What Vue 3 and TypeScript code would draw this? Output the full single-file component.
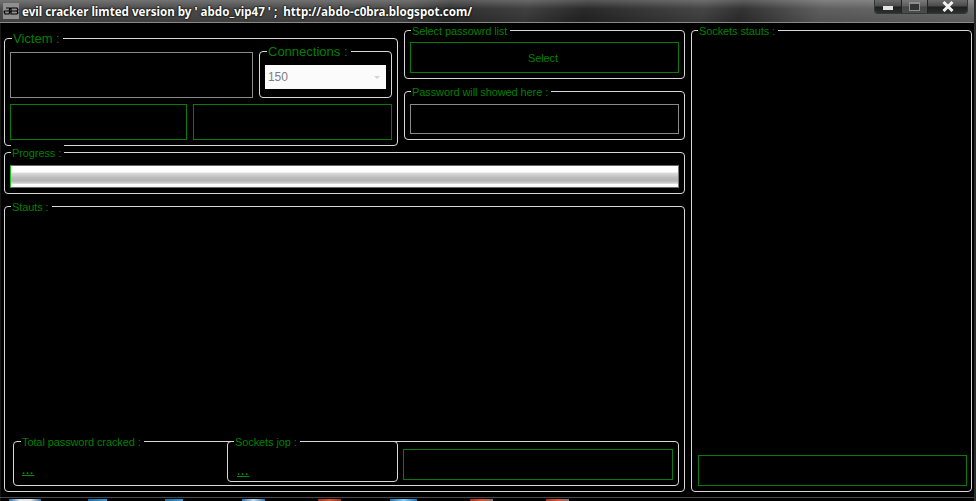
<script setup lang="ts">
const taskIcons = [
  { w: 32, gap: 9, c: 'linear-gradient(90deg,#1d6fb0,#d8e8f4,#e8e8e8,#2a6fa8)' },
  { w: 19, gap: 47, c: 'linear-gradient(90deg,#1a6ca8,#3a9ad0)' },
  { w: 18, gap: 58, c: 'linear-gradient(90deg,#1a6ca8,#3a9ad0)' },
  { w: 23, gap: 59, c: 'linear-gradient(90deg,#2a6fa8,#c8e0f0,#2a6fa8)' },
  { w: 23, gap: 53, c: 'linear-gradient(90deg,#a03020,#e05030,#a03020)' },
  { w: 27, gap: 49, c: 'linear-gradient(90deg,#1d6fb0,#7fd0ff,#1d6fb0)' },
  { w: 23, gap: 53, c: 'linear-gradient(90deg,#a03020,#e05030,#777)' },
  { w: 23, gap: 53, c: 'linear-gradient(90deg,#a03020,#e05030,#777)' },
]
</script>

<template>
  <div class="window">
    <header class="titlebar">
      <div class="app-icon">
        <svg width="16" height="16" viewBox="0 0 16 16">
          <rect width="16" height="16" fill="#8f8f8f" />
          <path d="M1 8h5l1-3H3M1 8l1 3h4l1-3M8 5h6l1 2-1 1H8m6 0 1 2-1 1H8V5" fill="none" stroke="#000" stroke-width="1.2" />
        </svg>
      </div>
      <span class="title">evil cracker limted version by ' abdo_vip47 ' ;&nbsp; http://abdo-c0bra.blogspot.com/</span>
      <div class="controls">
        <span class="ctl ctl-min"><i class="min-glyph"></i></span>
        <span class="ctl ctl-max"><i class="max-glyph"></i></span>
        <span class="ctl ctl-close">
          <svg width="12" height="11" viewBox="0 0 12 11"><path d="M1.5 1 10.5 10M10.5 1 1.5 10" stroke="#f2f2f2" stroke-width="3" /></svg>
        </span>
      </div>
    </header>

    <main class="body">
      <div class="left">
        <div class="top-row">
          <section class="group victim">
            <span class="legend big">Victem :</span>
            <div class="victim-top">
              <div class="box gray target"></div>
              <section class="group conn">
                <span class="legend big conn-legend">Connections :</span>
                <div class="select"><span>150</span><i class="caret"></i></div>
              </section>
            </div>
            <div class="victim-bottom">
              <div class="box green a"></div>
              <div class="box green b"></div>
            </div>
          </section>
          <div class="pass-col">
            <section class="group pass-list">
              <span class="legend">Select passowrd list</span>
              <div class="box green select-btn">Select</div>
            </section>
            <section class="group pass-show">
              <span class="legend">Password will showed here :</span>
              <div class="box gray show"></div>
            </section>
          </div>
        </div>

        <section class="group progress">
          <span class="legend">Progress :</span>
          <div class="bar"></div>
        </section>

        <section class="group status">
          <span class="legend">Stauts :</span>
          <div class="stats">
            <span class="legend">Total password cracked :</span>
            <div class="stat-spacer">
              <u class="dots">...</u>
            </div>
            <section class="group jobs">
              <span class="legend">Sockets jop :</span>
              <u class="dots">...</u>
            </section>
            <div class="box green stat-box"></div>
          </div>
        </section>
      </div>

      <section class="group sockets">
        <span class="legend">Sockets stauts :</span>
        <div class="box green sockets-box"></div>
      </section>
    </main>

    <footer class="taskbar">
      <i v-for="(t, n) in taskIcons" :key="n" class="task" :style="{ width: t.w + 'px', marginLeft: t.gap + 'px', background: t.c }"></i>
    </footer>
  </div>
</template>

<style>
html, body { margin: 0; background: #000; overflow: hidden; }
</style>

<style scoped>
.window {
  width: 976px;
  height: 501px;
  background: #000;
  font-family: "Liberation Sans", "Noto Sans", sans-serif;
  font-size: 11px;
  letter-spacing: -0.1px;
  color: #008000;
  display: flex;
  flex-direction: column;
  overflow: hidden;
  box-sizing: border-box;
  border-right: 2px solid #2c2c2c;
  box-shadow: inset 1px 0 0 #161616;
}
.titlebar {
  height: 22px;
  flex: none;
  border-bottom: 1px solid #8a8a8a;
  display: flex;
  align-items: center;
  position: relative;
  background:
    linear-gradient(180deg, rgba(255,255,255,.24) 0, rgba(255,255,255,.03) 40%, rgba(0,0,0,.1) 100%),
    linear-gradient(105deg, #484848 0, #444 42%, #2a2a2a 46%, #3a3a3a 54%, #232323 60%, #404040 72%, #2c2c2c 76%, #5a5a5a 84%, #666 100%);
}
.app-icon { width: 16px; height: 16px; margin-left: 3px; flex: none; }
.app-icon svg { display: block; }
.title {
  margin-left: 3px;
  color: #fff;
  font-family: "Noto Sans", sans-serif;
  font-size: 11.6px;
  letter-spacing: 0;
  font-weight: 700;
  white-space: pre;
  text-shadow: 0 0 2px #000, 0 0 2px #000;
}
.controls {
  position: absolute;
  right: 6px;
  top: 0;
  height: 13px;
  display: flex;
  border: 1px solid #2a3a34;
  border-top: 0;
  border-radius: 0 0 4px 4px;
  overflow: hidden;
}
.ctl {
  height: 13px;
  display: flex;
  align-items: center;
  justify-content: center;
  background: linear-gradient(180deg, #6a6a6a 0, #4a4a4a 48%, #1e1e1e 52%, #2e2e2e 100%);
}
.ctl-min { width: 26px; border-right: 1px solid #222; }
.ctl-max { width: 25px; border-right: 1px solid #222; background: linear-gradient(180deg, #7a7a7a 0, #5c5c5c 48%, #444 52%, #4c4c4c 100%); }
.ctl-close { width: 39px; }
.min-glyph { width: 10px; height: 4px; margin-top: 3px; background: #e4e4e4; display: block; }
.max-glyph { width: 11px; height: 9px; box-sizing: border-box; border: 1px solid #8e8e8e; border-top-width: 2px; background: #333; display: block; }

.body {
  flex: 1;
  min-height: 0;
  display: flex;
  gap: 6px;
  padding: 7px 2px 5px 4px;
}
.left {
  width: 681px;
  flex: none;
  display: flex;
  flex-direction: column;
  gap: 12px;
}
.group {
  position: relative;
  box-sizing: border-box;
  border: 1px solid #d8d8d8;
  border-radius: 4px;
}
.legend {
  position: absolute;
  top: -8px;
  left: 6px;
  padding: 0 3px 0 1px;
  background: #000;
  color: #008000;
  line-height: 16px;
  white-space: nowrap;
}
.big { font-size: 13px; left: 7px; top: -8px; letter-spacing: 0; }
.conn-legend { left: 7px; }
.box { box-sizing: border-box; border: 1px solid #006400; }
.box.gray { border-color: #8a8a8a; }
.box.green { border-color: #0a7a0a; }

.top-row {
  display: flex;
  gap: 6px;
  align-items: flex-start;
}
.victim {
  width: 394px;
  height: 108px;
  margin-top: 8px;
  padding: 13px 5px 5px;
}
.victim-top { display: flex; gap: 6px; }
.target { width: 243px; height: 46px; }
.conn { width: 133px; height: 47px; margin-top: -1px; padding: 13px 5px 7px; }
.select {
  width: 121px;
  height: 24px;
  background: #fbfbfb;
  color: #7d7d7d;
  font-size: 12px;
  line-height: 24px;
  padding-left: 3px;
  box-sizing: border-box;
  position: relative;
}
.caret {
  position: absolute;
  right: 6px;
  top: 11px;
  border: 3px solid transparent;
  border-top: 3px solid #d4d4d4;
  border-bottom: 0;
}
.victim-bottom { display: flex; gap: 6px; margin-top: 6px; }
.victim-bottom .a { width: 177px; height: 36px; }
.victim-bottom .b { width: 199px; height: 36px; }

.pass-col {
  width: 281px;
  display: flex;
  flex-direction: column;
  gap: 12px;
}
.pass-list { height: 49px; padding: 11px 5px 4px; }
.select-btn {
  height: 31px;
  text-align: center;
  line-height: 30px;
  padding-right: 3px;
}
.pass-show { height: 49px; padding: 12px 5px 5px; }
.show { height: 30px; }

.progress { height: 42px; margin-top: -6px; padding: 12px 5px 4px; }
.bar {
  height: 23px;
  box-sizing: border-box;
  border-left: 1px solid #19c219;
  border-right: 1px solid #7a7a7a;
  border-top: 1px solid #666;
  border-bottom: 1px solid #666;
  background: linear-gradient(180deg, #fff 0, #fff 27%, #d8d8d8 36%, #bcbcbc 55%, #b4b4b4 70%, #d0d0d0 82%, #fff 88%, #f4f4f4 100%);
}

.status {
  flex: 1;
  min-height: 0;
  padding: 0 5px 5px 8px;
  display: flex;
  flex-direction: column;
  justify-content: flex-end;
}
.stats {
  position: relative;
  height: 45px;
  box-sizing: border-box;
  border: 1px solid #d8d8d8;
  border-radius: 4px;
  display: flex;
}
.stats > .legend { left: 7px; }
.stat-spacer { width: 213px; flex: none; display: flex; align-items: flex-end; padding: 0 0 7px 8px; box-sizing: border-box; }
.jobs { width: 171px; height: 41px; margin-top: -1px; flex: none; padding: 21px 0 0 9px; }
.dots { line-height: 16px; display: block; letter-spacing: 1px; font-weight: 700; width: 12px; color: #0a8a0a; }
.stat-box { width: 270px; height: 31px; margin: 7px 0 0 5px; }

.sockets {
  width: 281px;
  flex: none;
  display: flex;
  flex-direction: column;
  justify-content: flex-end;
  padding: 0 4px 5px 6px;
}
.sockets-box { height: 31px; }

.taskbar {
  flex: none;
  height: 3px;
  display: flex;
  align-items: flex-end;
  border-top: 1px solid #4a4a4a;
}
.task { display: block; height: 2px; flex: none; }
</style>
